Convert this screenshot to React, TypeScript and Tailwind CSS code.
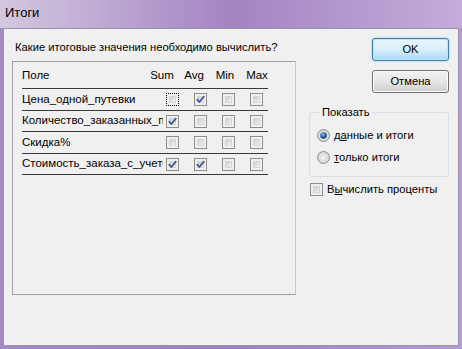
import React from "react";

const font = { fontFamily: '"Liberation Sans", Arial, sans-serif' };

function CheckBox({ checked, focus }: { checked?: boolean; focus?: boolean }) {
  return (
    <div
      className={
        "relative w-[13px] h-[13px] shrink-0 " +
        (focus ? "border border-dotted border-black" : "border border-[#8f8f8f]")
      }
    >
      <div className="absolute inset-[2px] bg-gradient-to-br from-[#c9ccd2] to-[#f4f4f4] border border-[#d6d6d6]" />
      {checked && (
        <svg className="absolute inset-0" width="11" height="11" viewBox="0 0 11 11">
          <path d="M2.2 5.6 L4.4 8 L8.8 2.6" fill="none" stroke="#3f5794" strokeWidth="1.7" strokeLinecap="round" strokeLinejoin="round" />
        </svg>
      )}
    </div>
  );
}

function Radio({ checked }: { checked?: boolean }) {
  return (
    <svg width="13" height="13" viewBox="0 0 13 13" className="shrink-0">
      <defs>
        <radialGradient id="rg" cx="50%" cy="50%" r="50%">
          <stop offset="0%" stopColor="#f4f4f4" />
          <stop offset="100%" stopColor="#cfd2d6" />
        </radialGradient>
        <radialGradient id="rd" cx="40%" cy="35%" r="60%">
          <stop offset="0%" stopColor="#8ec4ef" />
          <stop offset="60%" stopColor="#2b6bb0" />
          <stop offset="100%" stopColor="#17427a" />
        </radialGradient>
      </defs>
      <circle cx="6.5" cy="6.5" r="6" fill="url(#rg)" stroke="#8f8f8f" strokeWidth="1" />
      {checked && <circle cx="6.5" cy="6.5" r="3.3" fill="url(#rd)" />}
    </svg>
  );
}

const rows = [
  { name: "Цена_одной_путевки", checks: [false, true, false, false], focus: 0, h: "h-[21px]" },
  { name: "Количество_заказанных_путевок", checks: [true, false, false, false], focus: -1, h: "h-[20px]" },
  { name: "Скидка%", checks: [false, false, false, false], focus: -1, h: "h-[21px]" },
  { name: "Стоимость_заказа_с_учетом_скидки", checks: [true, true, false, false], focus: -1, h: "h-[20px]" },
];

export default function App() {
  return (
    <div
      className="w-[462px] h-[349px] flex flex-col text-[11px] text-black bg-gradient-to-r from-[#a38bc6] via-[#9c80bf] to-[#b59bd2]"
      style={font}
    >
      {/* Title bar */}
      <div className="h-[28px] shrink-0 flex items-center pl-[5px] bg-gradient-to-r from-[#d2c8df] via-[#a583c2] to-[#c4acdb]">
        <span className="text-[13px] text-black pb-[2px]">Итоги</span>
      </div>
      {/* Client */}
      <div className="mx-[3px] mb-[3px] flex-1 border border-[#9d93ab] bg-[#f0f0f0] flex">
        {/* Left */}
        <div className="pl-[8px] flex flex-col">
          <div className="mt-[11px] h-[14px] leading-[14px] pl-[3px] text-[11.2px]">
            Какие итоговые значения необходимо вычислить?
          </div>
          <div className="mt-[7px] w-[284px] h-[234px] border border-[#a0a0a0] border-r-[#c8c8c8] bg-[#f0f0f0]">
            <div className="h-[26px] flex items-center pl-[9px] pt-[2px] text-[11.5px]">
              <div className="w-[126px]">Поле</div>
              <div className="w-[28px] text-center">Sum</div>
              <div className="w-[28px] ml-[4px] text-center">Avg</div>
              <div className="w-[28px] ml-[3px] text-center">Min</div>
              <div className="w-[28px] ml-[4px] text-center">Max</div>
            </div>
            <div className="ml-[9px] w-[246px] h-px bg-[#3a3a3a]" />
            {rows.map((r) => (
              <div key={r.name}>
                <div className={"flex items-center pl-[9px] text-[11.5px] " + r.h}>
                  <div className="w-[141px] mr-[3px] whitespace-nowrap overflow-hidden">{r.name}</div>
                  {r.checks.map((c, i) => (
                    <div key={i} className="w-[28px]">
                      <CheckBox checked={c} focus={r.focus === i} />
                    </div>
                  ))}
                </div>
                <div className="ml-[9px] w-[246px] h-px bg-[#3a3a3a]" />
              </div>
            ))}
          </div>
        </div>
        {/* Right */}
        <div className="ml-[13px] w-[140px] flex flex-col text-[11.2px]">
          <button className="mt-[9px] self-end w-[77px] h-[23px] rounded-[3px] border border-[#3c7fb1] bg-gradient-to-b from-[#eaf6fd] via-[#d9f0fc] to-[#a7d9f5] shadow-[inset_0_0_0_1px_#bfe6f9,0_0_2px_#6bc5f0] flex items-center justify-center">
            OK
          </button>
          <button className="mt-[9px] self-end w-[77px] h-[23px] rounded-[3px] border border-[#707070] bg-gradient-to-b from-[#f2f2f2] via-[#e6e6e6] to-[#cfcfcf] shadow-[inset_0_0_0_1px_#fcfcfc] flex items-center justify-center">
            Отмена
          </button>
          <fieldset className="mt-[12px] w-[140px] border border-[#d5dfe5] rounded-[3px] px-[6px] pb-[8px] pt-[5px]">
            <legend className="ml-[4px] px-[2px] leading-[14px]">Показать</legend>
            <div className="h-[22px] flex items-center gap-[4px] ml-[1px]">
              <Radio checked />
              <span>
                д<span className="underline">а</span>нные и итоги
              </span>
            </div>
            <div className="h-[22px] flex items-center gap-[4px] ml-[1px]">
              <Radio />
              <span>
                <span className="underline">т</span>олько итоги
              </span>
            </div>
          </fieldset>
          <div className="mt-[6px] h-[13px] flex items-center gap-[4px] ml-[1px]">
            <CheckBox />
            <span>
              В<span className="underline">ы</span>числить проценты
            </span>
          </div>
        </div>
      </div>
    </div>
  );
}
